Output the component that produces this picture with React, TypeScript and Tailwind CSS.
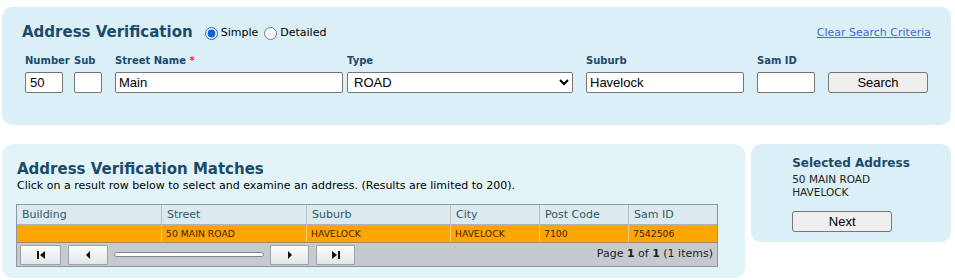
import React from "react";

const font = { fontFamily: '"DejaVu Sans", Verdana, sans-serif' };

function PagerBtn({ children, w }: { children: React.ReactNode; w: string }) {
  return (
    <div
      className={`${w} h-[20px] flex items-center justify-center border border-[#9aa3aa] bg-gradient-to-b from-[#fdfdfd] to-[#e3e5e8] rounded-[1px]`}
    >
      {children}
    </div>
  );
}

export default function App() {
  const cols = ["w-[144px]", "w-[145px]", "w-[144px]", "w-[89px]", "w-[89px]", "w-[89px]"];
  const headers = ["Building", "Street", "Suburb", "City", "Post Code", "Sam ID"];
  const row = ["", "50 MAIN ROAD", "HAVELOCK", "HAVELOCK", "7100", "7542506"];
  const arial = { fontFamily: '"Liberation Sans", Arial, sans-serif' };
  return (
    <div className="w-[955px] h-[280px] bg-white overflow-hidden" style={font}>
      {/* Top search panel */}
      <div className="ml-[2px] mr-[4px] mt-[7px] h-[118px] rounded-[10px] bg-[#dbeff7] pl-[20px] pr-[20px] pt-[16px]">
        <div className="flex items-center h-[18px]">
          <div className="text-[15px] leading-[18px] font-bold text-[#1b4a6b]">Address Verification</div>
          <label className="ml-[12px] flex items-center text-[11px] text-black mt-[2px]">
            <input type="radio" name="mode" defaultChecked className="m-0 w-[13px] h-[13px] accent-[#0a66d8]" />
            <span className="ml-[3px]">Simple</span>
          </label>
          <label className="ml-[6px] flex items-center text-[11px] text-black mt-[2px]">
            <input type="radio" name="mode" className="m-0 w-[13px] h-[13px]" />
            <span className="ml-[3px]">Detailed</span>
          </label>
          <a className="ml-auto text-[11px] text-[#4a6bd6] underline mt-[2px]" href="#">
            Clear Search Criteria
          </a>
        </div>
        <div className="flex items-end ml-[3px] mt-[14px] text-[10px] font-bold text-[#1b4a6b] leading-[12px]">
          <div className="w-[38px] flex flex-col">
            <span className="whitespace-nowrap">Number</span>
            <input defaultValue="50" className="mt-[5px] h-[21px] w-[38px] border border-[#767676] rounded-[2px] bg-white px-[4px] text-[13px] font-normal text-black" style={arial} />
          </div>
          <div className="ml-[11px] w-[28px] flex flex-col">
            <span>Sub</span>
            <input className="mt-[5px] h-[21px] w-[28px] border border-[#767676] rounded-[2px] bg-white" />
          </div>
          <div className="ml-[13px] w-[228px] flex flex-col">
            <span>
              Street Name <span className="text-[#e03030]">*</span>
            </span>
            <input defaultValue="Main" className="mt-[5px] h-[21px] w-[228px] border border-[#767676] rounded-[2px] bg-white px-[3px] text-[13px] font-normal text-black" style={arial} />
          </div>
          <div className="ml-[4px] w-[226px] flex flex-col">
            <span>Type</span>
            <select defaultValue="ROAD" className="mt-[5px] h-[21px] w-[226px] border border-[#767676] rounded-[2px] bg-white pl-[2px] text-[13px] font-normal text-black" style={arial}>
              <option>ROAD</option>
              <option>STREET</option>
            </select>
          </div>
          <div className="ml-[13px] w-[158px] flex flex-col">
            <span>Suburb</span>
            <input defaultValue="Havelock" className="mt-[5px] h-[21px] w-[158px] border border-[#767676] rounded-[2px] bg-white px-[3px] text-[13px] font-normal text-black" style={arial} />
          </div>
          <div className="ml-[13px] w-[58px] flex flex-col">
            <span>Sam ID</span>
            <input className="mt-[5px] h-[21px] w-[58px] border border-[#767676] rounded-[2px] bg-white" />
          </div>
          <button className="ml-[13px] h-[21px] w-[100px] border border-[#767676] rounded-[3px] bg-[#efefef] text-[13px] font-normal text-black" style={arial}>
            Search
          </button>
        </div>
      </div>

      {/* Bottom row */}
      <div className="flex items-start ml-[2px] mt-[19px]">
        <div className="w-[743px] h-[134px] rounded-[10px] bg-[#e3f4f9] pl-[14px] pt-[16px]">
          <div className="text-[15px] leading-[18px] font-bold text-[#1b4a6b] pl-[1px]">Address Verification Matches</div>
          <div className="text-[11px] leading-[13px] text-black pl-[1px] mt-[1px]">
            Click on a result row below to select and examine an address. (Results are limited to 200).
          </div>
          <div className="mt-[12px] w-[702px] border border-[#8b98a0]">
            <div className="flex h-[20px] bg-[#dce9ee] text-[11px] text-[#2d5a6b] border-b border-[#aab6bc]">
              {headers.map((h, i) => (
                <div key={h} className={`${cols[i]} ${i > 0 ? "border-l border-[#b5c2c8]" : ""} pl-[5px] leading-[19px]`}>
                  {h}
                </div>
              ))}
            </div>
            <div className="flex h-[18px] bg-[#ffa500] text-[9.3px] text-[#3a2600] border-b border-[#a08a60]">
              {row.map((c, i) => (
                <div key={i} className={`${cols[i]} ${i > 0 ? "border-l border-[#ffd27a]" : ""} pl-[4px] leading-[17px]`}>
                  {c}
                </div>
              ))}
            </div>
            <div className="flex items-center h-[23px] bg-[#c6cace] pl-[3px] pr-[4px]">
              <PagerBtn w="w-[41px]">
                <svg width="10" height="10" viewBox="0 0 10 10"><rect x="1" y="1" width="2" height="8" fill="#111" /><polygon points="9,1 9,9 4,5" fill="#111" /></svg>
              </PagerBtn>
              <div className="ml-[7px]">
                <PagerBtn w="w-[40px]">
                  <svg width="10" height="10" viewBox="0 0 10 10"><polygon points="7,1 7,9 3,5" fill="#111" /></svg>
                </PagerBtn>
              </div>
              <div className="ml-[6px] w-[150px] h-[5px] rounded-full border border-[#7d8590] bg-white" />
              <div className="ml-[6px]">
                <PagerBtn w="w-[39px]">
                  <svg width="10" height="10" viewBox="0 0 10 10"><polygon points="3,1 3,9 7,5" fill="#111" /></svg>
                </PagerBtn>
              </div>
              <div className="ml-[7px]">
                <PagerBtn w="w-[39px]">
                  <svg width="10" height="10" viewBox="0 0 10 10"><polygon points="1,1 1,9 6,5" fill="#111" /><rect x="7" y="1" width="2" height="8" fill="#111" /></svg>
                </PagerBtn>
              </div>
              <div className="ml-auto text-[11px] text-[#222]">
                Page <b>1</b> of <b>1</b> (1 items)
              </div>
            </div>
          </div>
        </div>
        <div className="ml-[6px] w-[200px] h-[98px] rounded-[10px] bg-[#dbeff7] pt-[12px] flex justify-center">
          <div className="flex flex-col items-start">
            <div className="text-[12px] leading-[15px] font-bold text-[#1b4a6b]">Selected Address</div>
            <div className="mt-[2px] text-[10.5px] leading-[13px] text-[#222]">50 MAIN ROAD</div>
            <div className="text-[10.5px] leading-[13px] text-[#222]">HAVELOCK</div>
            <button className="mt-[12px] h-[21px] w-[100px] border border-[#767676] rounded-[3px] bg-[#efefef] text-[13px] text-black" style={arial}>
              Next
            </button>
          </div>
        </div>
      </div>
    </div>
  );
}
